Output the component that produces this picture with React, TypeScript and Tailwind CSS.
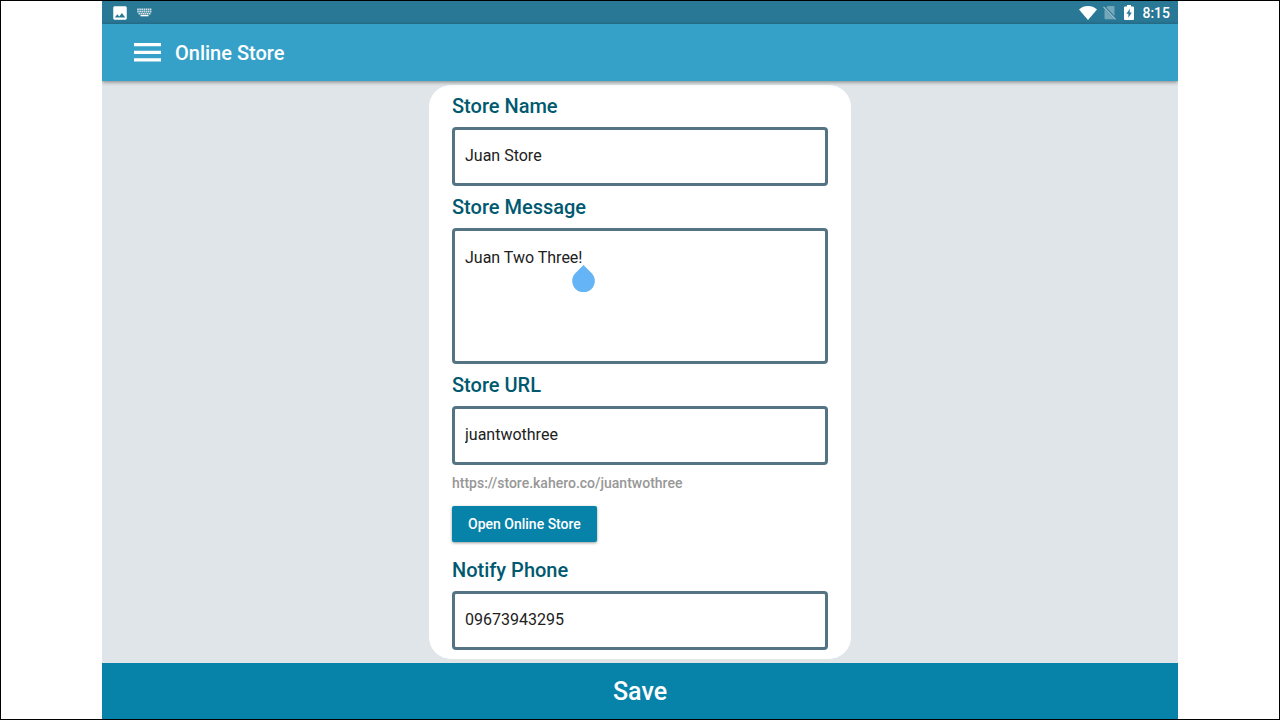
import React, { useState } from 'react';
import { MdImage } from 'react-icons/md';

const labelClass = 'block text-[20px] leading-6 font-medium text-[#00596f]';
const fieldClass =
  'mt-[9px] block w-full rounded border-3 border-[#547486] bg-white px-[10px] text-[16px] text-[#212121] outline-none';

const KeyboardIcon: React.FC = () => (
  <svg width="15" height="9" viewBox="0 0 15 9" stroke="currentColor" aria-hidden="true">
    <path d="M0.200 1.400h14.600M0.200 3.600h14.600M1.500 5.800h12" strokeWidth="1.600" strokeDasharray="1.600 0.500" opacity="0.800" />
    <path d="M3.500 7.600h8" strokeWidth="1.400" />
  </svg>
);

const StatusBar: React.FC = () => (
  <div className="flex h-[23px] shrink-0 items-center justify-between bg-[#297896] pl-[9px] pr-2 text-white">
    <div className="flex items-center gap-2">
      <MdImage size={18} />
      <KeyboardIcon />
    </div>
    <div className="flex items-center">
      <svg width="18" height="14" viewBox="0 0 18 14" fill="currentColor" aria-hidden="true">
        <path d="M9 14 0 3.400C2.500 1.200 5.600 0 9 0s6.500 1.200 9 3.400z" />
      </svg>
      {/* no sim */}
      <svg className="ml-[6px]" width="13" height="14" viewBox="0 0 13 14" aria-hidden="true">
        <g fill="currentColor" opacity="0.350">
          <path d="M4.800 0H10.500a1 1 0 0 1 1 1V10L3.300 1.500z" />
          <path d="M1.500 3.300 11.300 13.200H2.500a1 1 0 0 1-1-1z" />
        </g>
        <path d="M0.500 0.900 12.500 13.400" stroke="currentColor" strokeWidth="1.100" opacity="0.600" />
      </svg>
      {/* battery charging */}
      <svg className="ml-2" width="10" height="15" viewBox="0 0 10 15" aria-hidden="true">
        <path
          d="M3 0h4v1.500h2a1 1 0 0 1 1 1V14a1 1 0 0 1-1 1H1a1 1 0 0 1-1-1V2.500a1 1 0 0 1 1-1h2z"
          fill="currentColor"
        />
        <path d="M6 3.800 2.300 8.800H4.400V12.800L7.800 7.500H5.600z" fill="#297896" />
      </svg>
      <span className="ml-2 text-[14px] leading-5 font-medium">8:15</span>
    </div>
  </div>
);

const Header: React.FC = () => (
  <header className="relative z-10 flex h-[57px] shrink-0 items-center bg-[#35a1c8] pl-8 shadow-[0_1px_4px_rgba(0,0,0,0.45)]">
    <button type="button" aria-label="Open menu" className="text-white">
      <svg width="27" height="19" viewBox="0 0 27 19" fill="currentColor" aria-hidden="true">
        <path d="M0 0h27v3.200H0zM0 7.700h27v3.200H0zM0 15.300h27v3.200H0z" />
      </svg>
    </button>
    <h1 className="ml-[14px] text-[20px] leading-6 font-medium text-white">Online Store</h1>
  </header>
);

const App: React.FC = () => {
  const [name, setName] = useState('Juan Store');
  const [message, setMessage] = useState('Juan Two Three!');
  const [slug, setSlug] = useState('juantwothree');
  const [phone, setPhone] = useState('09673943295');

  return (
    <div className="min-h-screen border border-black bg-white px-[101px] font-['Roboto',sans-serif]">
      <div className="flex min-h-[calc(100vh-2px)] flex-col overflow-hidden bg-[#dfe5e8]">
        <StatusBar />
        <Header />

        <main className="flex-1 py-1">
          <form
            id="store-form"
            className="mx-auto max-w-[422px] rounded-[22px] bg-white px-[23px] py-[9px]"
            onSubmit={e => e.preventDefault()}
          >
            <label htmlFor="store-name" className={labelClass}>Store Name</label>
            <input
              id="store-name"
              className={`${fieldClass} h-[59px] pb-[2px]`}
              value={name}
              onChange={e => setName(e.target.value)}
            />

            <label htmlFor="store-message" className={`${labelClass} mt-[9px]`}>Store Message</label>
            <div className="relative">
              <textarea
                id="store-message"
                className={`${fieldClass} h-[136px] resize-none pt-[15px] leading-6`}
                value={message}
                onChange={e => setMessage(e.target.value)}
              />
              {/* text cursor handle */}
              <svg
                className="absolute top-[37px] left-[120px]"
                width="23"
                height="27"
                viewBox="0 0 23 27"
                fill="#64b4f6"
                aria-hidden="true"
              >
                <path d="M11.500 0 19.500 8A11.300 11.300 0 1 1 3.500 8z" />
              </svg>
            </div>

            <label htmlFor="store-url" className={`${labelClass} mt-[9px]`}>Store URL</label>
            <input
              id="store-url"
              className={`${fieldClass} h-[59px] pb-[2px]`}
              value={slug}
              onChange={e => setSlug(e.target.value)}
            />
            <p className="mt-2 text-[14px] leading-5 font-medium text-[#979797]">
              https://store.kahero.co/{slug}
            </p>

            <button
              type="button"
              className="mt-[13px] block h-9 rounded-xs bg-[#0782a9] px-4 text-[14px] font-medium text-white shadow-[0_1px_3px_rgba(0,0,0,0.4)]"
            >
              Open Online Store
            </button>

            <label htmlFor="notify-phone" className={`${labelClass} mt-4`}>Notify Phone</label>
            <input
              id="notify-phone"
              type="tel"
              className={`${fieldClass} h-[59px] pb-[2px]`}
              value={phone}
              onChange={e => setPhone(e.target.value)}
            />
          </form>
        </main>

        <button
          type="submit"
          form="store-form"
          className="h-14 w-full shrink-0 bg-[#0782a9] pt-[2px] text-[25px] font-medium text-white"
        >
          Save
        </button>
      </div>
    </div>
  );
};

export default App;
